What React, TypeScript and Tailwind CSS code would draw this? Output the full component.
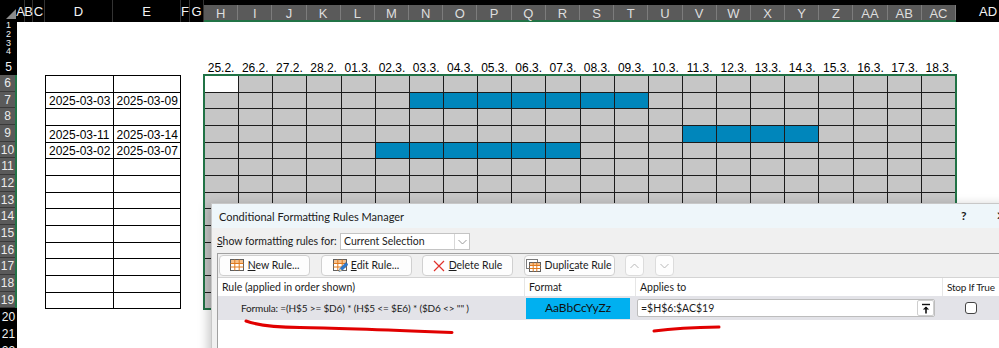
import React from "react";

const dates = ["25.2.", "26.2.", "27.2.", "28.2.", "01.3.", "02.3.", "03.3.", "04.3.", "05.3.", "06.3.", "07.3.", "08.3.", "09.3.", "10.3.", "11.3.", "12.3.", "13.3.", "14.3.", "15.3.", "16.3.", "17.3.", "18.3."];
const gridCols = ["H", "I", "J", "K", "L", "M", "N", "O", "P", "Q", "R", "S", "T", "U", "V", "W", "X", "Y", "Z", "AA", "AB", "AC"];
const leftCols = [
  { label: "A", w: "w-[8px]" },
  { label: "B", w: "w-[8px]" },
  { label: "C", w: "w-[12px]" },
  { label: "D", w: "w-[68px]" },
  { label: "E", w: "w-[68px]" },
  { label: "F", w: "w-[9px]" },
  { label: "G", w: "w-[14px]" },
];

// rows 6..19 share the same heights everywhere
const rowHeights = "grid-rows-[17px_16px_17px_17px_16px_17px_17px_16px_17px_17px_16px_17px_17px_16px]";

// start/end column index (H = 0) of the highlighted bars, by row index (row 6 = 0)
const bars: Record<number, [number, number]> = { 1: [6, 12], 3: [14, 17], 4: [5, 10] };
const ranges: Record<number, [string, string]> = {
  1: ["2025-03-03", "2025-03-09"],
  3: ["2025-03-11", "2025-03-14"],
  4: ["2025-03-02", "2025-03-07"],
};

function cellColor(r: number, c: number) {
  if (r === 0 && c === 0) return "bg-white";
  const bar = bars[r];
  if (bar && c >= bar[0] && c <= bar[1]) return "bg-[#0086bb]";
  return "bg-[#c6c6c6]";
}

function TableIcon({ pencil = false }: { pencil?: boolean }) {
  return (
    <svg width="15" height="13" viewBox="0 0 15 13">
      <rect x="0.5" y="0.5" width="13" height="11" fill="#fff" stroke="#5f5f5f" />
      <rect x="1" y="1" width="12" height="3" fill="#f6c08a" />
      <path d="M0.5 4.5H13.5M0.5 8H13.5M4.8 0.5V11.5M9.2 0.5V11.5" stroke="#e07a1f" />
      {pencil && (
        <>
          <path d="M6 12.5L7 9.5L13 3.5L15 5.5L9 11.5Z" fill="#2b79d0" stroke="#1a5aa6" strokeWidth="0.6" />
          <path d="M6 12.5L7 9.5L9 11.5Z" fill="#f3d39a" />
        </>
      )}
    </svg>
  );
}

function DupIcon() {
  return (
    <svg width="15" height="13" viewBox="0 0 15 13">
      <rect x="0.5" y="0.5" width="11" height="9" fill="#fff" stroke="#7a7a7a" />
      <rect x="3.5" y="3.5" width="11" height="9" fill="#fff" stroke="#5f5f5f" />
      <rect x="4" y="4" width="10" height="2.5" fill="#f6c08a" />
      <path d="M3.5 6.5H14.5M3.5 9.5H14.5M7.2 3.5V12.5M10.8 3.5V12.5" stroke="#e07a1f" />
    </svg>
  );
}

function Chevron({ up = false, color = "#8a8a8a" }: { up?: boolean; color?: string }) {
  return (
    <svg width="9" height="6" viewBox="0 0 9 6">
      <path d={up ? "M0.5 5L4.5 1L8.5 5" : "M0.5 1L4.5 5L8.5 1"} fill="none" stroke={color} strokeWidth="1" />
    </svg>
  );
}

export default function App() {
  return (
    <div className="relative w-[999px] h-[348px] overflow-hidden bg-white font-['Liberation_Sans',Arial,sans-serif]">
      {/* column headers */}
      <div className="flex h-[22px] bg-black text-[13px] leading-none text-[#f2f2f2]">
        <div className="w-[17px] shrink-0 relative">
          <svg width="17" height="22" viewBox="0 0 17 22" className="block">
            <polygon points="16,9 16,19 6,19" fill="#8c8c8c" />
          </svg>
        </div>
        {leftCols.map((col) => (
          <div key={col.label} className={`${col.w} shrink-0 flex items-end justify-center pb-[4px] border-r border-[#333]`}>
            {col.label}
          </div>
        ))}
        <div className="grid grid-cols-22 w-[752px] shrink-0 h-[17px] self-end bg-[#5a5a5a] border-b-2 border-[#217346] text-[#dedede]">
          {gridCols.map((c) => (
            <div key={c} className="flex items-center justify-center border-r border-[#7c7c7c] pt-[1px]">
              {c}
            </div>
          ))}
        </div>
        <div className="w-[64px] shrink-0 flex items-end justify-center pb-[4px]">AD</div>
      </div>

      <div className="flex">
        {/* row headers */}
        <div className="w-[17px] shrink-0 flex flex-col bg-black text-[12px] leading-none text-[#f2f2f2]">
          <div className="h-[8px] overflow-hidden flex items-end justify-center text-[9px]">1</div>
          <div className="h-[9px] overflow-hidden flex items-center justify-center text-[9px]">2</div>
          <div className="h-[8px] overflow-hidden flex items-center justify-center text-[9px]">3</div>
          <div className="h-[8px] overflow-hidden flex items-start justify-center text-[9px]">4</div>
          <div className="h-[20px] flex items-center justify-center pt-[4px]">5</div>
          <div className={`grid ${rowHeights} bg-[#5a5a5a] border-r-2 border-[#217346] text-[#ececec]`}>
            {Array.from({ length: 14 }, (_, i) => (
              <div key={i} className="flex items-center justify-center border-b border-[#3a3a3a]">
                {i + 6}
              </div>
            ))}
          </div>
          <div className="h-[17px] flex items-center justify-center">20</div>
          <div className="h-[17px] flex items-center justify-center">21</div>
          <div className="h-[17px] flex items-center justify-center">22</div>
        </div>

        {/* sheet */}
        <div className="flex-1 flex flex-col text-[12px] leading-none text-black">
          <div className="h-[33px]" />
          <div className="h-[20px] flex items-end pb-[1px]">
            <div className="w-[187px] shrink-0" />
            <div className="grid grid-cols-22 w-[752px] shrink-0">
              {dates.map((d) => (
                <div key={d} className="text-center">
                  {d}
                </div>
              ))}
            </div>
          </div>
          <div className="flex">
            <div className="w-[28px] shrink-0" />
            <div className={`grid grid-cols-2 ${rowHeights} w-[136px] shrink-0 border-l border-t border-black`}>
              {Array.from({ length: 14 }, (_, r) =>
                [0, 1].map((c) => (
                  <div key={`${r}-${c}`} className="border-r border-b border-black flex items-center pl-[3px] pt-[1px]">
                    {ranges[r] ? ranges[r][c] : ""}
                  </div>
                ))
              )}
            </div>
            <div className="w-[23px] shrink-0" />
            <div className={`grid grid-cols-22 ${rowHeights} w-[752px] shrink-0 border-l border-t border-[#1c1c1c] outline-2 outline-[#217346] -outline-offset-1`}>
              {Array.from({ length: 14 }, (_, r) =>
                gridCols.map((col, c) => (
                  <div key={`${r}-${col}`} className={`border-r border-b border-[#1c1c1c] ${cellColor(r, c)}`} />
                ))
              )}
            </div>
          </div>
        </div>
      </div>

      {/* dialog */}
      <div className="absolute left-[211px] top-[203px] w-[800px] h-[160px] bg-[#f0f0f0] border border-[#c8c8c8] shadow-[-3px_2px_10px_rgba(0,0,0,0.22)] font-['Lato',sans-serif] text-[10.5px] leading-none text-[#1b1b1b] whitespace-nowrap">
        <div className="h-[24px] bg-[#eef6fa] flex items-center pl-[7px]">
          <span className="text-[11px]">Conditional Formatting Rules Manager</span>
          <div className="ml-auto w-[48px] mr-[4px] flex items-center text-[12px]">
            <span className="pl-[3px] font-bold">?</span>
            <span className="ml-auto">✕</span>
          </div>
        </div>

        <div className="pl-[5px] pt-[5px]">
          <div className="flex items-center h-[17px]">
            <span className="w-[123px]">
              <span className="underline">S</span>how formatting rules for:
            </span>
            <div className="w-[130px] h-[17px] bg-white border border-[#c4c4c4] flex items-center">
              <span className="flex-1 pl-[3px]">Current Selection</span>
              <span className="w-[15px] h-full border-l border-[#d8d8d8] flex items-center justify-center">
                <Chevron color="#9a9a9a" />
              </span>
            </div>
          </div>

          <div className="mt-[3px] border-t border-l border-[#a0a0a0]">
            <div className="flex gap-[10.5px] pl-[1px] pt-[1px] h-[23px]">
              <button className="w-[91px] h-[21px] bg-[#fdfdfd] border border-[#d0d0d0] rounded-[4px] flex items-center justify-center gap-[3px]">
                <TableIcon />
                <span>
                  <span className="underline">N</span>ew Rule...
                </span>
              </button>
              <button className="w-[91px] h-[21px] bg-[#fdfdfd] border border-[#d0d0d0] rounded-[4px] flex items-center justify-center gap-[3px]">
                <TableIcon pencil />
                <span>
                  <span className="underline">E</span>dit Rule...
                </span>
              </button>
              <button className="w-[91px] h-[21px] bg-[#fdfdfd] border border-[#d0d0d0] rounded-[4px] flex items-center justify-center gap-[4px]">
                <svg width="12" height="12" viewBox="0 0 12 12">
                  <path d="M1 1L11 11M11 1L1 11" stroke="#e0312b" strokeWidth="1.2" />
                </svg>
                <span>
                  <span className="underline">D</span>elete Rule
                </span>
              </button>
              <button className="w-[91px] h-[21px] bg-[#fdfdfd] border border-[#d0d0d0] rounded-[4px] flex items-center justify-center gap-[3px]">
                <DupIcon />
                <span>
                  Dupli<span className="underline">c</span>ate Rule
                </span>
              </button>
              <button className="w-[19px] h-[21px] bg-[#fdfdfd] border border-[#dcdcdc] rounded-[4px] flex items-center justify-center">
                <Chevron up color="#b8b8b8" />
              </button>
              <button className="w-[19px] h-[21px] bg-[#fdfdfd] border border-[#dcdcdc] rounded-[4px] flex items-center justify-center">
                <Chevron color="#b8b8b8" />
              </button>
            </div>

            <div className="bg-white border-t border-[#d4d4d4] h-[80px]">
              <div className="flex h-[18px] items-center">
                <div className="w-[307px] h-full flex items-center pl-[4px] border-r border-[#e6e6e6]">Rule (applied in order shown)</div>
                <div className="w-[111px] h-full flex items-center pl-[4px] border-r border-[#e6e6e6]">Format</div>
                <div className="w-[307px] h-full flex items-center pl-[4px] border-r border-[#e6e6e6]">Applies to</div>
                <div className="flex-1 h-full flex items-center pl-[4px] text-[10px] tracking-[-0.2px]">Stop If True</div>
              </div>
              <div className="flex h-[24px] items-center bg-[#e3e3e8]">
                <div className="w-[307px] pl-[23px] whitespace-pre text-[10px] tracking-[-0.15px]">{`Formula: =(H$5 >= $D6) * (H$5 <= $E6) * ($D6 <> "" )`}</div>
                <div className="w-[111px] pl-[1px]">
                  <div className="w-[104px] h-[21px] bg-[#00b0f0] flex items-center justify-center text-[12px] text-[#111]">AaBbCcYyZz</div>
                </div>
                <div className="w-[307px] pl-[1px]">
                  <div className="w-[298px] h-[18px] bg-white border border-[#bdbdbd] rounded-[2px] flex items-center">
                    <span className="flex-1 pl-[3px]">=$H$6:$AC$19</span>
                    <span className="w-[17px] h-[16px] border border-[#cfcfcf] rounded-[2px] flex items-center justify-center">
                      <svg width="10" height="11" viewBox="0 0 10 11">
                        <path d="M1 1.5H9" stroke="#111" strokeWidth="1.4" />
                        <path d="M5 4V10.5" stroke="#111" strokeWidth="1.6" />
                        <path d="M1.8 6.6L5 3.4L8.2 6.6Z" fill="#111" />
                      </svg>
                    </span>
                  </div>
                </div>
                <div className="flex-1 pl-[22px]">
                  <div className="w-[12px] h-[12px] bg-white border border-[#444] rounded-[3px]" />
                </div>
              </div>
            </div>
          </div>
        </div>
      </div>

      {/* red hand-drawn marks */}
      <svg className="absolute left-0 top-0 pointer-events-none" width="999" height="348" viewBox="0 0 999 348">
        <path d="M246 321 Q 262 327 300 327.5 T 452 332.5" fill="none" stroke="#e10000" strokeWidth="3" strokeLinecap="round" />
        <path d="M654 331 Q 680 327.5 719 327" fill="none" stroke="#e10000" strokeWidth="3" strokeLinecap="round" />
      </svg>
    </div>
  );
}
